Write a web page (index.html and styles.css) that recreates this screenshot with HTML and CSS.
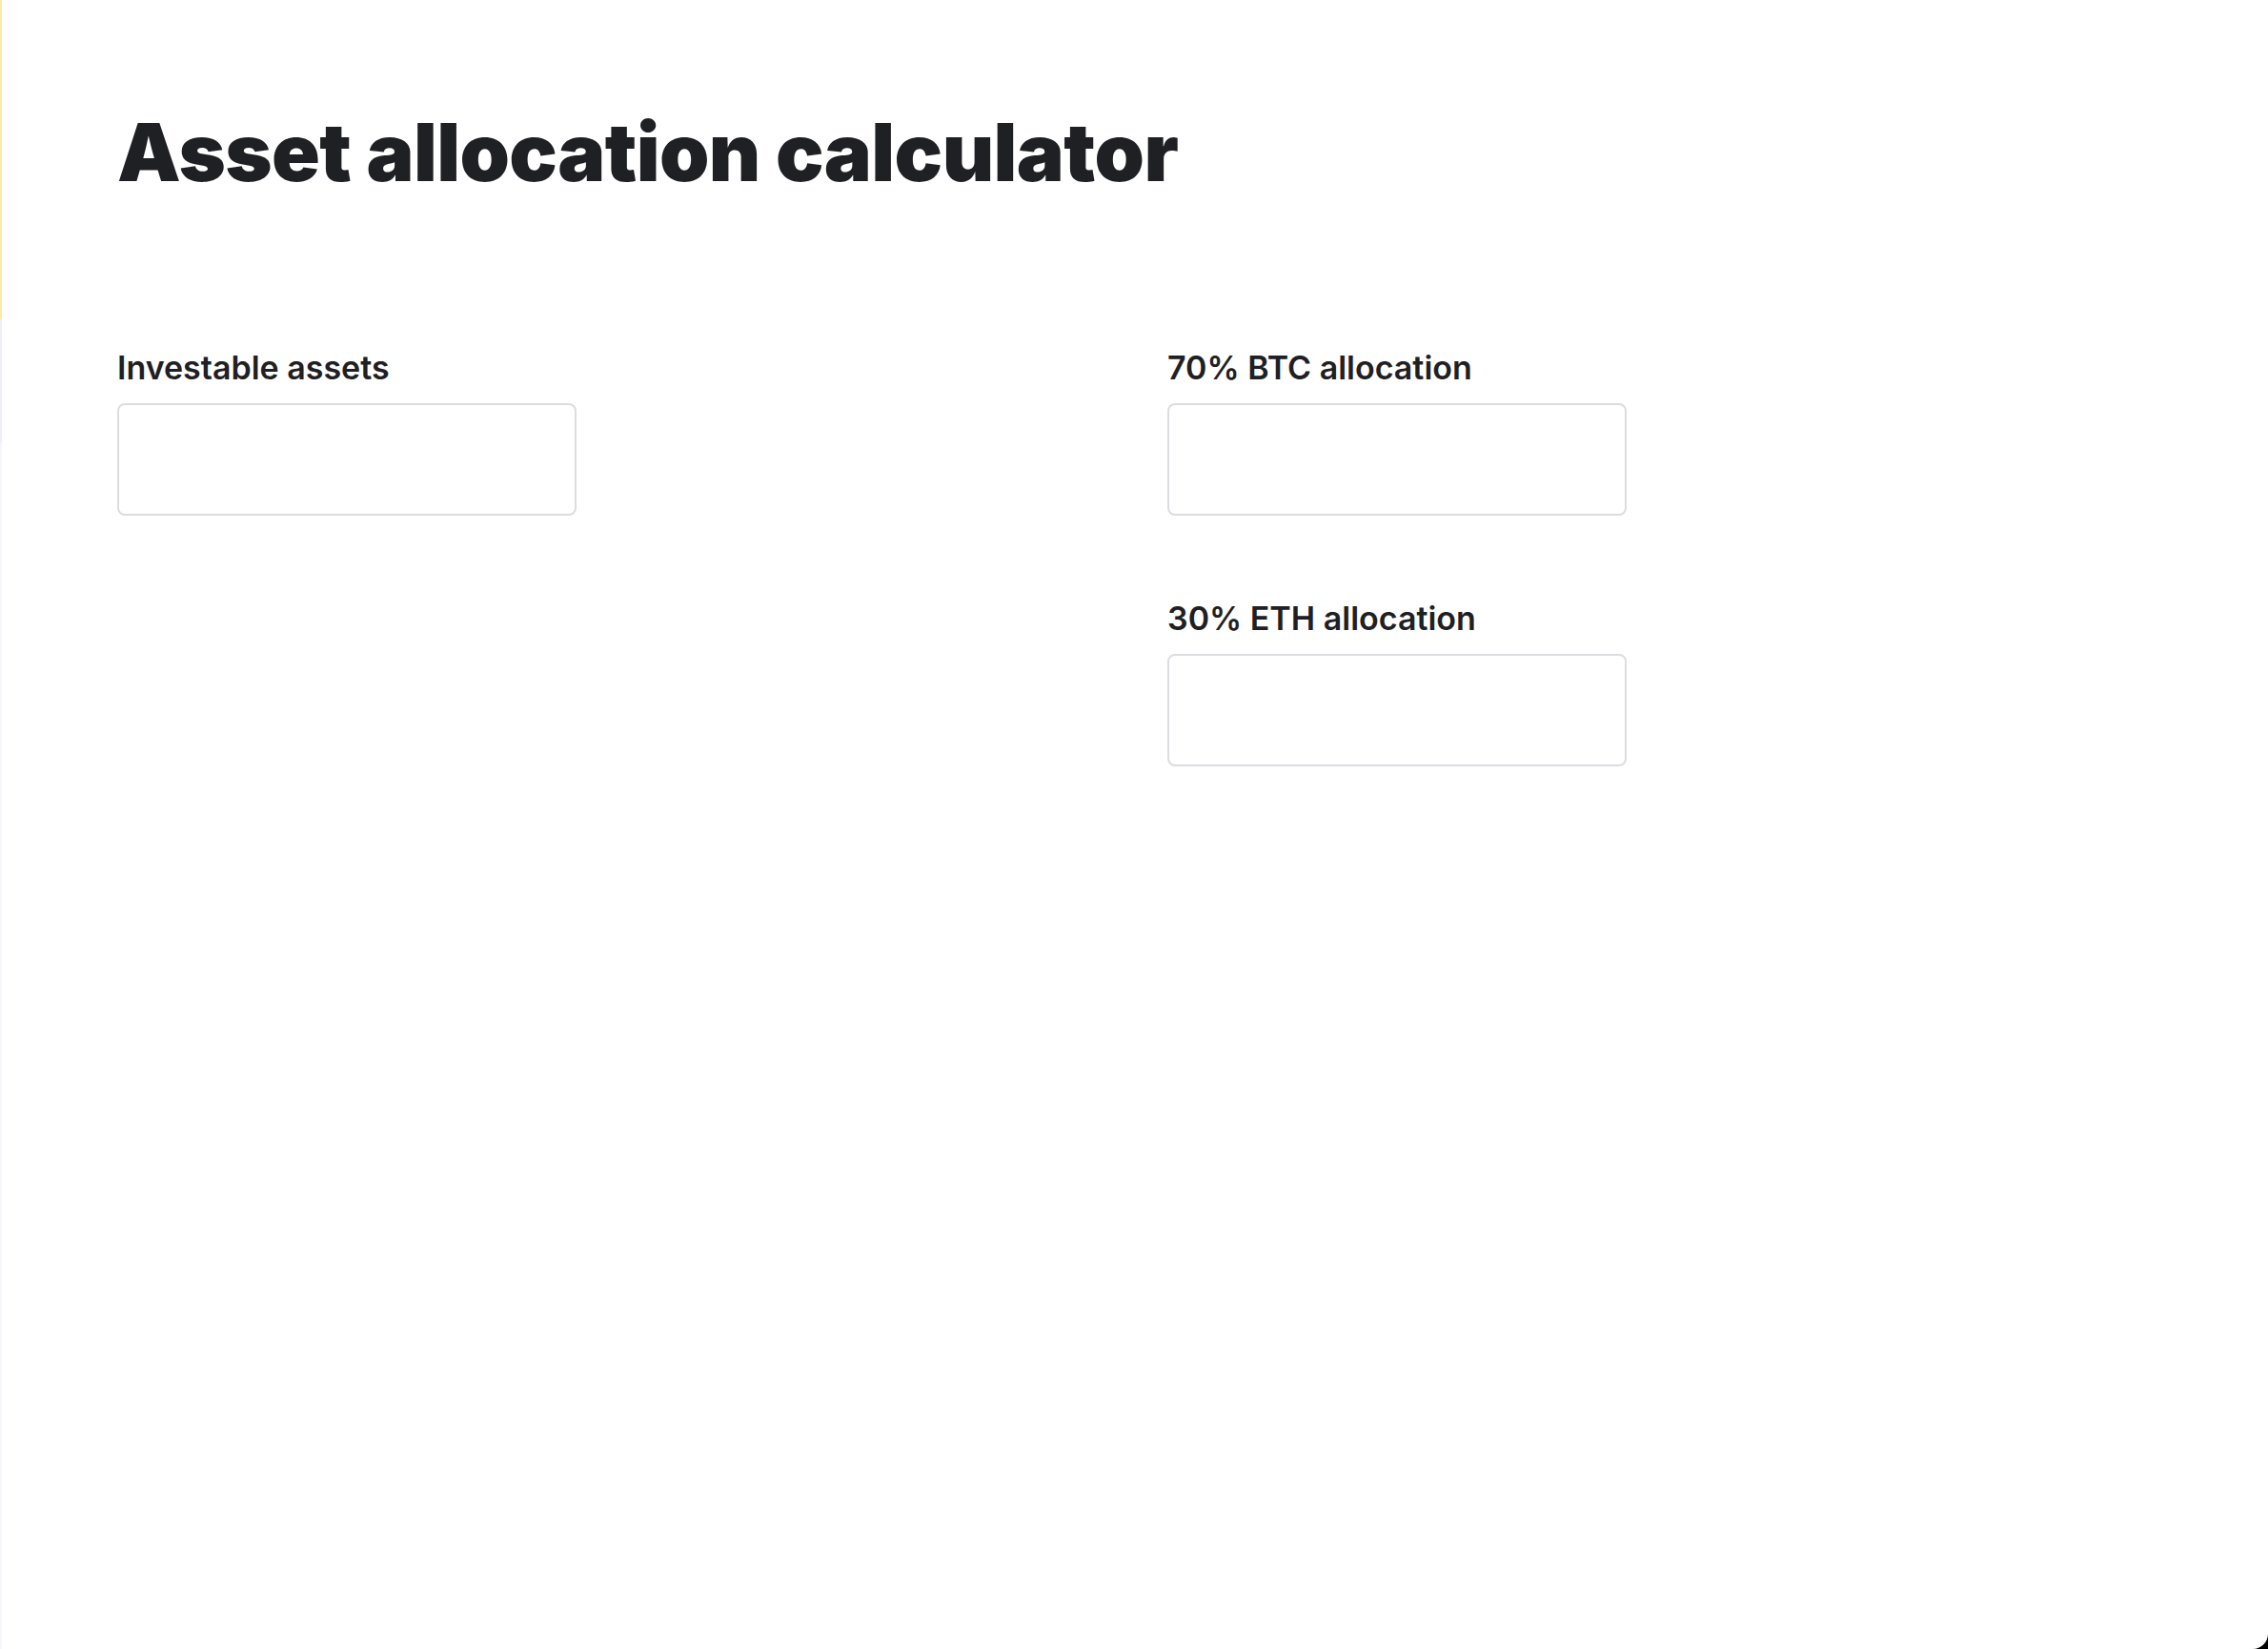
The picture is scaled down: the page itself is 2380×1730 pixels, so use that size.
FILE: index.html
```html
<!DOCTYPE html>
<html lang="en">
<head>
<meta charset="utf-8">
<title>Asset allocation calculator</title>
<link rel="stylesheet" href="styles.css">
</head>
<body>
<div class="frame">
  <div class="edge">
    <div class="edge-top"></div>
    <div class="edge-mid"></div>
    <div class="edge-rest"></div>
  </div>
  <main class="page">
    <h1 class="title">Asset allocation calculator</h1>
    <div class="form">
      <div class="col">
        <div class="field">
          <label class="label" for="assets">Investable assets</label>
          <input class="input" id="assets" type="text">
        </div>
      </div>
      <div class="col">
        <div class="field">
          <label class="label" for="btc">70% BTC allocation</label>
          <input class="input" id="btc" type="text">
        </div>
        <div class="field">
          <label class="label" for="eth">30% ETH allocation</label>
          <input class="input" id="eth" type="text">
        </div>
      </div>
    </div>
  </main>
</div>
</body>
</html>
```

FILE: styles.css
```css
html, body {
  margin: 0;
  padding: 0;
  height: 100%;
}
body {
  background: #000000;
  font-family: Inter, "Noto Sans", "Liberation Sans", sans-serif;
  color: #1f2023;
}
.frame {
  display: flex;
  height: 1730px;
  background: #ffffff;
  border-bottom-right-radius: 16px;
  overflow: hidden;
}
.edge {
  width: 2px;
  display: flex;
  flex-direction: column;
  flex: none;
}
.edge-top {
  height: 335px;
  background: #fde9a3;
}
.edge-mid {
  height: 130px;
  background: #eef0f5;
}
.edge-rest {
  flex: 1;
  background: #f6f6fa;
}
.page {
  flex: 1;
  padding: 110px 0 0 121px;
}
.title {
  margin: 0;
  font-size: 84px;
  line-height: 100px;
  font-weight: 900;
  letter-spacing: -0.6px;
  color: #1f2023;
}
.form {
  display: grid;
  grid-template-columns: 1102px 1fr;
  margin-top: 152px;
}
.col {
  display: flex;
  flex-direction: column;
  gap: 84px;
}
.field {
  display: flex;
  flex-direction: column;
  gap: 13px;
}
.label {
  font-size: 34px;
  line-height: 48px;
  font-weight: 600;
  color: #1f2023;
}
.input {
  box-sizing: border-box;
  width: 482px;
  height: 118px;
  border: 2px solid #dcdde1;
  border-radius: 8px;
  background: #ffffff;
  padding: 0 20px;
  font: inherit;
  font-size: 34px;
  outline: none;
}
```
